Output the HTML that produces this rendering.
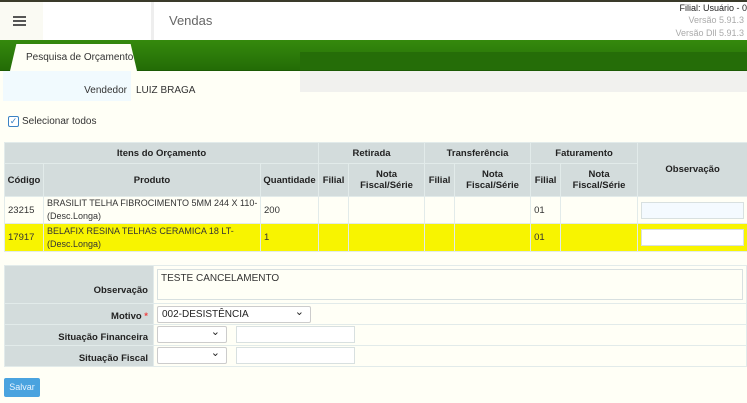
<!DOCTYPE html>
<html><head><meta charset="utf-8"><style>
*{box-sizing:border-box;margin:0;padding:0}
body{width:747px;height:403px;overflow:hidden;background:#fffff6;font-family:"Liberation Sans",sans-serif;font-size:10px;color:#222;position:relative}
.a{position:absolute}
table{border-collapse:collapse;table-layout:fixed}
td,th{border:1px solid #e2ebea}
th{background:#d3dcdc;font-weight:bold;font-size:9.5px;color:#222}
.t td{padding:0 3px;font-size:9.5px;color:#333;white-space:nowrap;overflow:hidden}
.y td{background:#f8f400}
.inp{background:#fff;border:1px solid #d8e0e0;height:17px}
.sel{background:#fff;border:1px solid #ccc;border-radius:2px;height:17px;font-size:10px;padding:2px 4px;position:absolute}
.sel:after{content:"⌄";position:absolute;right:6px;top:-2px;font-size:11px}
</style></head><body>
<div class="a" style="left:0;top:0;width:747px;height:2px;background:#3a3a2a"></div>
<div class="a" style="left:0;top:2px;width:747px;height:38px;background:#fff"></div>
<div class="a" style="left:0;top:2px;width:43px;height:38px;background:#fafaf3"></div>
<div class="a" style="left:151px;top:2px;width:3px;height:38px;background:#eee"></div>
<div class="a" style="left:13px;top:16px;width:13px;height:2px;background:#555;box-shadow:0 4px 0 #555,0 8px 0 #555"></div>
<div class="a" style="left:169px;top:13px;font-size:13px;color:#666">Vendas</div>
<div class="a" style="right:0;top:3px;font-size:9px;color:#222;white-space:nowrap">Filial: Usuário - 0</div>
<div class="a" style="right:3px;top:15px;font-size:9px;color:#aaa">Versão 5.91.3</div>
<div class="a" style="right:3px;top:28px;font-size:9px;color:#aaa">Versão Dll 5.91.3</div>
<div class="a" style="left:0;top:40px;width:747px;height:31px;background:linear-gradient(#358a0d,#236c06);border-bottom:1px solid #1c5a04"></div>
<div class="a" style="left:300px;top:52px;width:447px;height:18px;background:#256d08"></div>
<div class="a" style="left:10px;top:44px;width:127px;height:27px;background:#fffff6;clip-path:polygon(5% 0,95% 0,100% 100%,0 100%)"></div>
<div class="a" style="left:26px;top:52px;font-size:10px;color:#333">Pesquisa de Orçamento</div>
<div class="a" style="left:300px;top:71px;width:447px;height:21px;background:#f1f1ee"></div>
<div class="a" style="left:3px;top:71px;width:128px;height:30px;background:#f1fafe"></div>
<div class="a" style="left:60px;width:67px;text-align:right;top:85px;color:#333">Vendedor</div>
<div class="a" style="left:136px;top:85px;color:#333">LUIZ BRAGA</div>
<div class="a" style="left:8px;top:116px;width:11px;height:11px;border:1px solid #3b82c4;border-radius:2px;background:#fff;color:#3b82c4;font-size:9px;line-height:9px;text-align:center">✓</div>
<div class="a" style="left:22px;top:116px;color:#333">Selecionar todos</div>

<table class="a t" style="left:4px;top:142px;width:743px">
<colgroup><col style="width:39px"><col style="width:217px"><col style="width:58px"><col style="width:30px"><col style="width:76px"><col style="width:30px"><col style="width:76px"><col style="width:30px"><col style="width:77px"><col style="width:110px"></colgroup>
<tr style="height:21px"><th colspan="3">Itens do Orçamento</th><th colspan="2">Retirada</th><th colspan="2">Transferência</th><th colspan="2">Faturamento</th><th rowspan="2">Observação</th></tr>
<tr style="height:33px"><th>Código</th><th>Produto</th><th>Quantidade</th><th>Filial</th><th>Nota<br>Fiscal/Série</th><th>Filial</th><th>Nota<br>Fiscal/Série</th><th>Filial</th><th>Nota<br>Fiscal/Série</th></tr>
<tr style="height:27px;background:#fffff6"><td>23215</td><td style="line-height:13px;font-size:9px">BRASILIT TELHA FIBROCIMENTO 5MM 244 X 110-<br>(Desc.Longa)</td><td>200</td><td></td><td></td><td></td><td></td><td>01</td><td></td><td style="padding:3px"><div class="inp" style="background:#f4faff"></div></td></tr>
<tr class="y" style="height:28px"><td>17917</td><td style="line-height:13px;font-size:9px">BELAFIX RESINA TELHAS CERAMICA 18 LT-<br>(Desc.Longa)</td><td>1</td><td></td><td></td><td></td><td></td><td>01</td><td></td><td style="padding:3px"><div class="inp"></div></td></tr>
</table>

<table class="a" style="left:4px;top:265px;width:743px">
<colgroup><col style="width:149px"><col></colgroup>
<tr style="height:37px"><th style="text-align:right;padding:12px 5px 0 0">Observação</th><td style="padding:3px"><div style="height:31px;border:1px solid #d8e0e0;padding:3px;color:#333">TESTE CANCELAMENTO</div></td></tr>
<tr style="height:21px"><th style="text-align:right;padding:4px 5px 0 0">Motivo <span style="color:#e44">*</span></th><td style="position:relative"><div class="sel" style="left:3px;top:2px;width:154px">002-DESISTÊNCIA</div></td></tr>
<tr style="height:21px"><th style="text-align:right;padding:4px 5px 0 0">Situação Financeira</th><td style="position:relative"><div class="sel" style="left:3px;top:1px;width:70px"></div><div class="inp a" style="left:82px;top:1px;width:119px;height:17px"></div></td></tr>
<tr style="height:21px"><th style="text-align:right;padding:4px 5px 0 0">Situação Fiscal</th><td style="position:relative"><div class="sel" style="left:3px;top:1px;width:70px"></div><div class="inp a" style="left:82px;top:1px;width:119px;height:17px"></div></td></tr>
</table>
<div class="a" style="left:4px;top:378px;width:36px;height:19px;background:#4aa3df;border-radius:2px;color:#e8f4ff;font-size:9px;line-height:19px;text-align:center">Salvar</div>
</body></html>
